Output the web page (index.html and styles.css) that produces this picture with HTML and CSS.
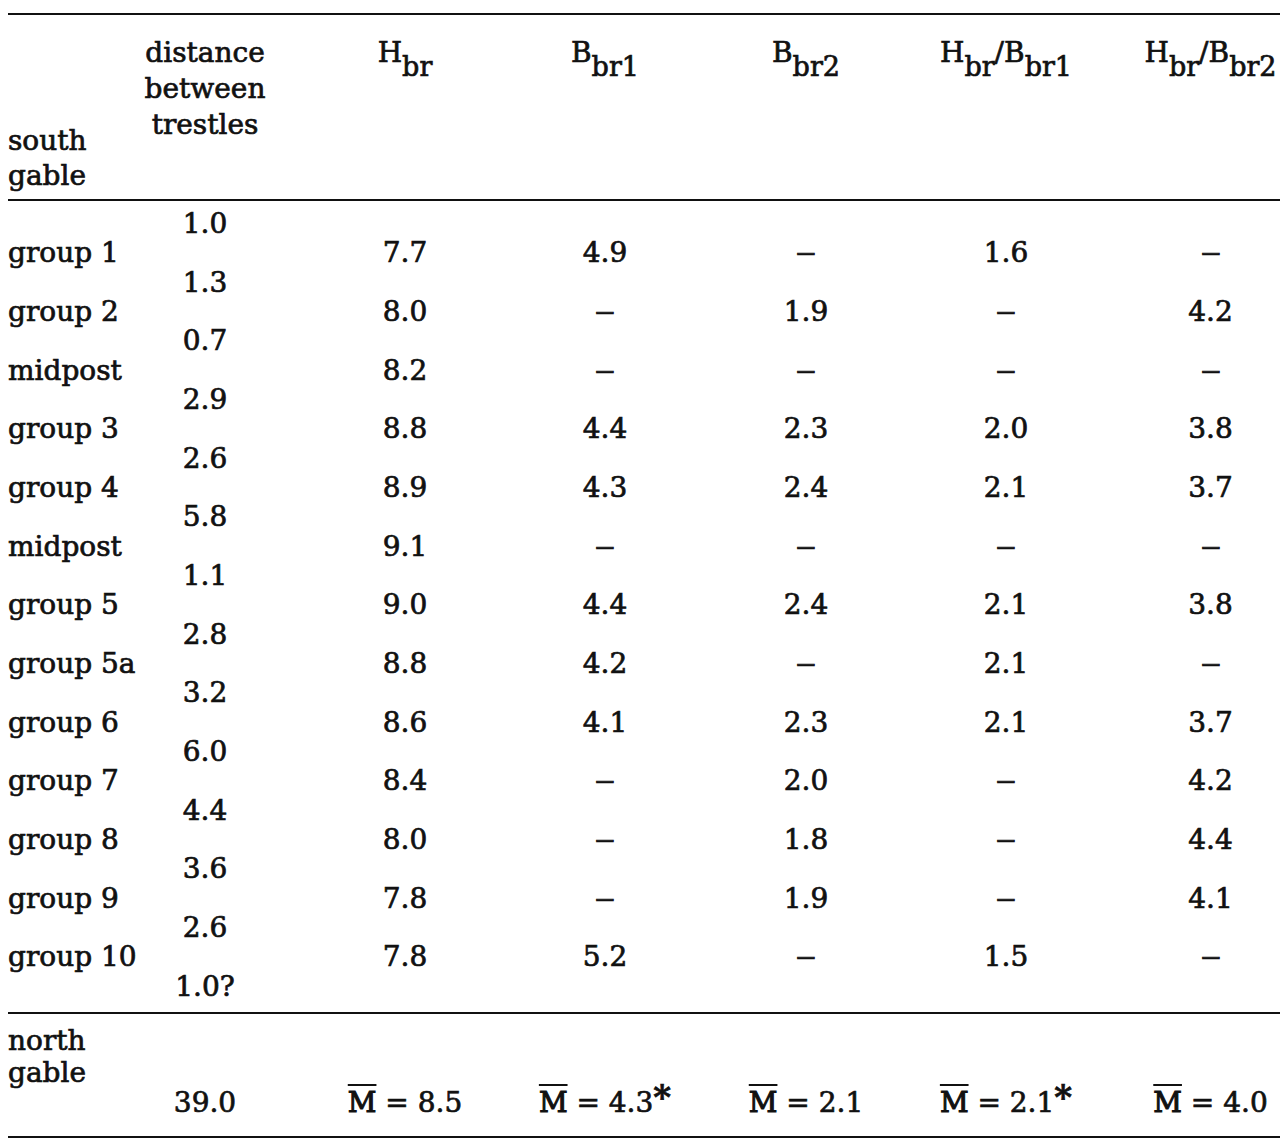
FILE: index.html
```html
<!DOCTYPE html>
<html lang="en">
<head>
<meta charset="utf-8">
<title>Trestle distances</title>
<link rel="stylesheet" href="styles.css">
</head>
<body>
<div class="table">
  <div class="head">
    <div class="c1 h-end">south<br>gable</div>
    <div class="c2">distance<br>between<br>trestles</div>
    <div class="c3">H<sub>br</sub></div>
    <div class="c4">B<sub>br1</sub></div>
    <div class="c5">B<sub>br2</sub></div>
    <div class="c6">H<sub>br</sub>/B<sub>br1</sub></div>
    <div class="c7">H<sub>br</sub>/B<sub>br2</sub></div>
  </div>
  <div class="body">
    <div class="line"><span class="c2">1.0</span></div>
    <div class="line"><span class="c1">group 1</span><span class="c3">7.7</span><span class="c4">4.9</span><span class="c5"><span class="dash">–</span></span><span class="c6">1.6</span><span class="c7"><span class="dash">–</span></span></div>
    <div class="line"><span class="c2">1.3</span></div>
    <div class="line"><span class="c1">group 2</span><span class="c3">8.0</span><span class="c4"><span class="dash">–</span></span><span class="c5">1.9</span><span class="c6"><span class="dash">–</span></span><span class="c7">4.2</span></div>
    <div class="line"><span class="c2">0.7</span></div>
    <div class="line"><span class="c1">midpost</span><span class="c3">8.2</span><span class="c4"><span class="dash">–</span></span><span class="c5"><span class="dash">–</span></span><span class="c6"><span class="dash">–</span></span><span class="c7"><span class="dash">–</span></span></div>
    <div class="line"><span class="c2">2.9</span></div>
    <div class="line"><span class="c1">group 3</span><span class="c3">8.8</span><span class="c4">4.4</span><span class="c5">2.3</span><span class="c6">2.0</span><span class="c7">3.8</span></div>
    <div class="line"><span class="c2">2.6</span></div>
    <div class="line"><span class="c1">group 4</span><span class="c3">8.9</span><span class="c4">4.3</span><span class="c5">2.4</span><span class="c6">2.1</span><span class="c7">3.7</span></div>
    <div class="line"><span class="c2">5.8</span></div>
    <div class="line"><span class="c1">midpost</span><span class="c3">9.1</span><span class="c4"><span class="dash">–</span></span><span class="c5"><span class="dash">–</span></span><span class="c6"><span class="dash">–</span></span><span class="c7"><span class="dash">–</span></span></div>
    <div class="line"><span class="c2">1.1</span></div>
    <div class="line"><span class="c1">group 5</span><span class="c3">9.0</span><span class="c4">4.4</span><span class="c5">2.4</span><span class="c6">2.1</span><span class="c7">3.8</span></div>
    <div class="line"><span class="c2">2.8</span></div>
    <div class="line"><span class="c1">group 5a</span><span class="c3">8.8</span><span class="c4">4.2</span><span class="c5"><span class="dash">–</span></span><span class="c6">2.1</span><span class="c7"><span class="dash">–</span></span></div>
    <div class="line"><span class="c2">3.2</span></div>
    <div class="line"><span class="c1">group 6</span><span class="c3">8.6</span><span class="c4">4.1</span><span class="c5">2.3</span><span class="c6">2.1</span><span class="c7">3.7</span></div>
    <div class="line"><span class="c2">6.0</span></div>
    <div class="line"><span class="c1">group 7</span><span class="c3">8.4</span><span class="c4"><span class="dash">–</span></span><span class="c5">2.0</span><span class="c6"><span class="dash">–</span></span><span class="c7">4.2</span></div>
    <div class="line"><span class="c2">4.4</span></div>
    <div class="line"><span class="c1">group 8</span><span class="c3">8.0</span><span class="c4"><span class="dash">–</span></span><span class="c5">1.8</span><span class="c6"><span class="dash">–</span></span><span class="c7">4.4</span></div>
    <div class="line"><span class="c2">3.6</span></div>
    <div class="line"><span class="c1">group 9</span><span class="c3">7.8</span><span class="c4"><span class="dash">–</span></span><span class="c5">1.9</span><span class="c6"><span class="dash">–</span></span><span class="c7">4.1</span></div>
    <div class="line"><span class="c2">2.6</span></div>
    <div class="line"><span class="c1">group 10</span><span class="c3">7.8</span><span class="c4">5.2</span><span class="c5"><span class="dash">–</span></span><span class="c6">1.5</span><span class="c7"><span class="dash">–</span></span></div>
    <div class="line"><span class="c2">1.0?</span></div>
  </div>
  <div class="foot">
    <div class="c1 f-start">north<br>gable</div>
    <div class="c2">39.0</div>
    <div class="c3"><span class="mbar">M</span> = 8.5</div>
    <div class="c4"><span class="mbar">M</span> = 4.3<span class="star">*</span></div>
    <div class="c5"><span class="mbar">M</span> = 2.1</div>
    <div class="c6"><span class="mbar">M</span> = 2.1<span class="star">*</span></div>
    <div class="c7"><span class="mbar">M</span> = 4.0</div>
  </div>
</div>
</body>
</html>
```
FILE: styles.css
```css
html, body {
  margin: 0;
  padding: 0;
  background: #ffffff;
  overflow: hidden;
}

body {
  font-family: "DejaVu Serif", "Liberation Serif", serif;
  font-size: 28px;
  color: #111111;
  -webkit-text-stroke: 0.7px #111111;
}

.table {
  margin: 13px 0 0 8px;
  width: 1272px;
  border-top: 2px solid #111111;
}

.head,
.line,
.foot {
  display: grid;
  grid-template-columns: 132px 130px 235px 200px 200px 200px 175px;
}

.c1 { grid-column: 1; text-align: left; }
.c2 { grid-column: 2; text-align: center; }
.c3 { grid-column: 3; text-align: center; padding-left: 35px; }
.c4 { grid-column: 4; text-align: center; }
.c5 { grid-column: 5; text-align: center; padding-left: 2px; }
.c6 { grid-column: 6; text-align: center; padding-left: 2px; }
.c7 { grid-column: 7; text-align: center; padding-left: 36px; white-space: nowrap; }

/* header */
.head {
  box-sizing: border-box;
  height: 186px;
  padding: 20px 0 6px;
  line-height: 36px;
  align-items: start;
  border-bottom: 2px solid #111111;
}

.head .h-end {
  align-self: end;
  line-height: 35px;
}

.head sub {
  font-size: 27px;
  vertical-align: -14px;
  line-height: 0;
}

/* body */
.body {
  padding: 8px 0 11px;
  border-bottom: 2px solid #111111;
}

.line {
  height: 29.33px;
  line-height: 29.33px;
  white-space: nowrap;
}

.dash {
  display: inline-block;
  transform: scaleX(1.45);
}

/* footer */
.foot {
  box-sizing: border-box;
  height: 124px;
  padding: 11px 0 17px;
  line-height: 32px;
  align-items: end;
  border-bottom: 2px solid #111111;
  white-space: nowrap;
}

.foot .f-start {
  align-self: start;
}

.mbar {
  -webkit-text-stroke: 1.1px #111111;
  text-decoration: overline;
  text-decoration-thickness: 2px;
}

.star {
  font-weight: bold;
  font-size: 34px;
  line-height: 0;
  vertical-align: 3px;
}
```
